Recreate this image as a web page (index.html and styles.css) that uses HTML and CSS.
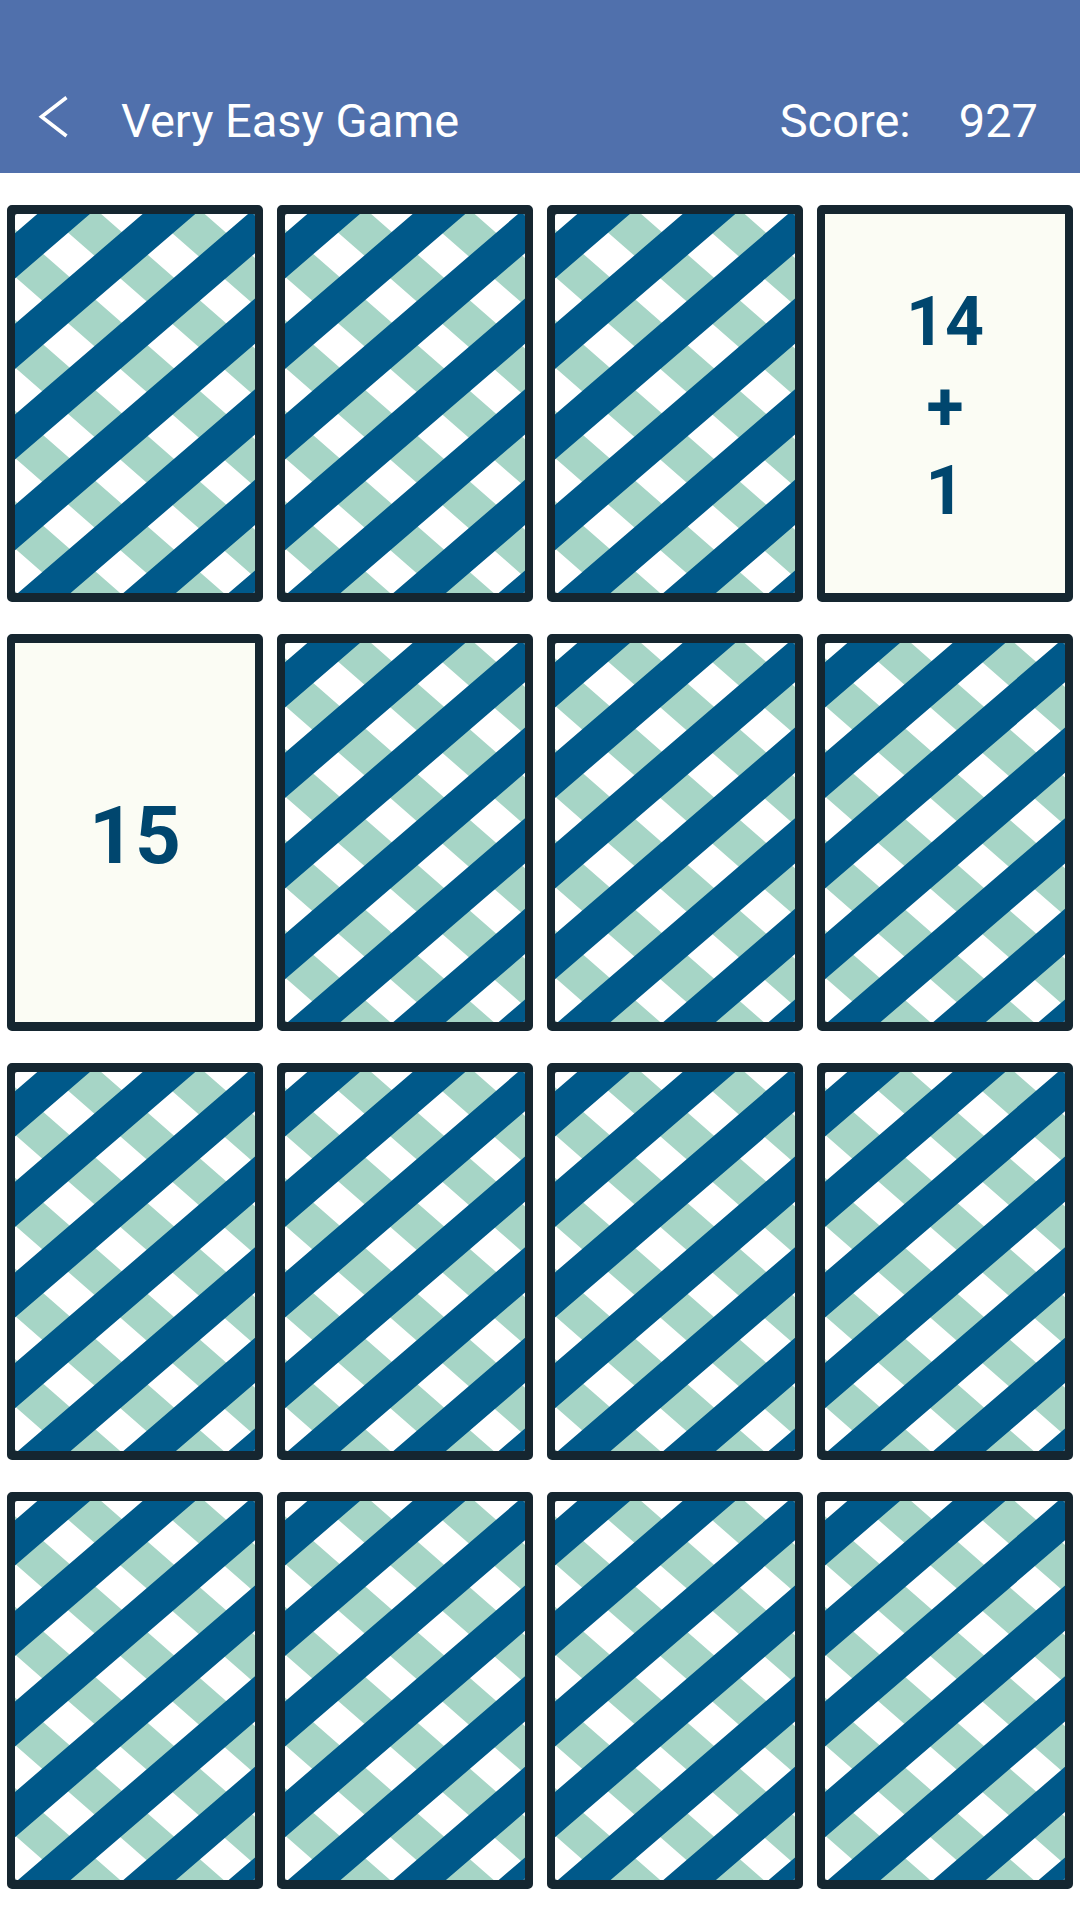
FILE: index.html
```html
<!DOCTYPE html>
<html lang="en">
<head>
  <meta charset="UTF-8">
  <title>Very Easy Game</title>
  <link rel="stylesheet" href="styles.css">
</head>
<body>

  <!-- shared card back: green bands under blue bands -->
  <svg class="defs" width="0" height="0">
    <defs>
      <g id="weave" fill="none">
        <path stroke="#a6d5c6" stroke-width="35.8" d="M-20 -250.3 L260 -5.3 M-20 -159.7 L260 85.3 M-20 -69.1 L260 175.9 M-20 21.5 L260 266.5 M-20 112.1 L260 357.1 M-20 202.7 L260 447.7 M-20 293.3 L260 538.3 M-20 383.9 L260 628.9"/>
        <path stroke="#00598a" stroke-width="34.3" d="M-20 59 L260 -181.8 M-20 149.6 L260 -91.2 M-20 240.2 L260 -0.6 M-20 330.8 L260 90 M-20 421.4 L260 180.6 M-20 512 L260 271.2 M-20 602.6 L260 361.8"/>
      </g>
    </defs>
  </svg>

  <header class="topbar">
    <svg class="back-btn" width="32" height="46" viewBox="0 0 32 46">
      <path d="M28.5 3.5 L3.5 22.8 L28.5 42" fill="none" stroke="#fff" stroke-width="3.6"/>
    </svg>
    <span class="title">Very Easy Game</span>
    <span class="score">Score:</span>
    <span class="points">927</span>
  </header>

  <main class="board">
    <div class="card"><svg class="weave"><use href="#weave"/></svg></div>
    <div class="card"><svg class="weave"><use href="#weave"/></svg></div>
    <div class="card"><svg class="weave"><use href="#weave"/></svg></div>
    <div class="card open"><span>14</span><span>+</span><span>1</span></div>

    <div class="card open big"><span>15</span></div>
    <div class="card"><svg class="weave"><use href="#weave"/></svg></div>
    <div class="card"><svg class="weave"><use href="#weave"/></svg></div>
    <div class="card"><svg class="weave"><use href="#weave"/></svg></div>

    <div class="card"><svg class="weave"><use href="#weave"/></svg></div>
    <div class="card"><svg class="weave"><use href="#weave"/></svg></div>
    <div class="card"><svg class="weave"><use href="#weave"/></svg></div>
    <div class="card"><svg class="weave"><use href="#weave"/></svg></div>

    <div class="card"><svg class="weave"><use href="#weave"/></svg></div>
    <div class="card"><svg class="weave"><use href="#weave"/></svg></div>
    <div class="card"><svg class="weave"><use href="#weave"/></svg></div>
    <div class="card"><svg class="weave"><use href="#weave"/></svg></div>
  </main>

</body>
</html>
```

FILE: styles.css
```css
body { margin:0; height:1920px; overflow:hidden; background:#fff;
       font-family:Roboto,sans-serif; }
.defs { display:block; height:0; }

/* Top bar */
.topbar {
  box-sizing:border-box; height:173px; display:flex; align-items:center;
  padding:68px 42px 0 38px; background:#5070ac; color:#fff;
  font-size:47px; font-weight:400;
}
.back-btn { flex:none; margin:0 51px 7px 0; }
.title { flex:1; }
.score { margin-right:48px; }

/* Cards */
.board {
  display:grid; grid-template-columns:repeat(4,256px); grid-auto-rows:397px;
  gap:32px 14px; padding:32px 7px 0;
}
.card {
  box-sizing:border-box; border:solid #152630; border-width:9px 8px; border-radius:5px;
  overflow:hidden; background:#152630;
}
.weave { display:block; width:100%; height:100%; border-radius:2px; background:#fff; }
.open {
  display:flex; flex-direction:column; align-items:center; justify-content:center;
  padding-top:7px; background:#fbfcf4; color:#00466e;
  font-size:68px; font-weight:700; line-height:84.5px;
}
.big { font-size:80px; }
```
